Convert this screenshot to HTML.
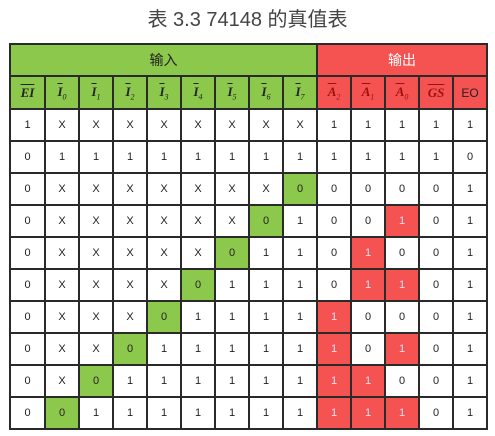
<!DOCTYPE html><html><head><style>
body{margin:0;background:#fff;width:495px;height:436px;overflow:hidden;font-family:"Liberation Sans","Noto Sans CJK SC",sans-serif}
.t{position:absolute;top:3px;left:0;width:495px;text-align:center;font-size:20px;color:#444;}
table{position:absolute;left:9px;top:43px;border-collapse:collapse;table-layout:fixed;width:479px}
td{border:2px solid #2a2a2a;height:30px;text-align:center;font-size:11px;color:#222;padding:0;box-sizing:border-box}
tr.h1 td{height:32px;font-size:14px}
tr.h2 td{height:33px;font-family:"Liberation Serif",serif;font-style:italic;font-weight:bold;font-size:13px}
tr.d td{height:32px}
.g{background:#8cc84b}.r{background:#f55252;color:#fde}
.o{text-decoration:overline}
sub{font-size:8px;font-weight:normal}
</style></head><body>
<div class="t">表 3.3 74148 的真值表</div>
<table>
<colgroup><col style="width:35px"><col span="13" style="width:34px"></colgroup>
<tr class="h1"><td colspan="9" class="g">输入</td><td colspan="5" class="r" style="color:#fff">输出</td></tr>
<tr class="h2"><td class="g"><span class="o">EI</span></td><td class="g"><span class="o">I</span><sub>0</sub></td><td class="g"><span class="o">I</span><sub>1</sub></td><td class="g"><span class="o">I</span><sub>2</sub></td><td class="g"><span class="o">I</span><sub>3</sub></td><td class="g"><span class="o">I</span><sub>4</sub></td><td class="g"><span class="o">I</span><sub>5</sub></td><td class="g"><span class="o">I</span><sub>6</sub></td><td class="g"><span class="o">I</span><sub>7</sub></td><td class="r" style="color:#a01010"><span class="o">A</span><sub>2</sub></td><td class="r" style="color:#a01010"><span class="o">A</span><sub>1</sub></td><td class="r" style="color:#a01010"><span class="o">A</span><sub>0</sub></td><td class="r" style="color:#a01010"><span class="o">GS</span></td><td class="r" style="font-family:'Liberation Sans',sans-serif;font-style:normal;font-weight:normal;font-size:12px;color:#222">EO</td></tr>
<tr class="d"><td>1</td><td>X</td><td>X</td><td>X</td><td>X</td><td>X</td><td>X</td><td>X</td><td>X</td><td>1</td><td>1</td><td>1</td><td>1</td><td>1</td></tr>
<tr class="d"><td>0</td><td>1</td><td>1</td><td>1</td><td>1</td><td>1</td><td>1</td><td>1</td><td>1</td><td>1</td><td>1</td><td>1</td><td>1</td><td>0</td></tr>
<tr class="d"><td>0</td><td>X</td><td>X</td><td>X</td><td>X</td><td>X</td><td>X</td><td>X</td><td class="g">0</td><td>0</td><td>0</td><td>0</td><td>0</td><td>1</td></tr>
<tr class="d"><td>0</td><td>X</td><td>X</td><td>X</td><td>X</td><td>X</td><td>X</td><td class="g">0</td><td>1</td><td>0</td><td>0</td><td class="r">1</td><td>0</td><td>1</td></tr>
<tr class="d"><td>0</td><td>X</td><td>X</td><td>X</td><td>X</td><td>X</td><td class="g">0</td><td>1</td><td>1</td><td>0</td><td class="r">1</td><td>0</td><td>0</td><td>1</td></tr>
<tr class="d"><td>0</td><td>X</td><td>X</td><td>X</td><td>X</td><td class="g">0</td><td>1</td><td>1</td><td>1</td><td>0</td><td class="r">1</td><td class="r">1</td><td>0</td><td>1</td></tr>
<tr class="d"><td>0</td><td>X</td><td>X</td><td>X</td><td class="g">0</td><td>1</td><td>1</td><td>1</td><td>1</td><td class="r">1</td><td>0</td><td>0</td><td>0</td><td>1</td></tr>
<tr class="d"><td>0</td><td>X</td><td>X</td><td class="g">0</td><td>1</td><td>1</td><td>1</td><td>1</td><td>1</td><td class="r">1</td><td>0</td><td class="r">1</td><td>0</td><td>1</td></tr>
<tr class="d"><td>0</td><td>X</td><td class="g">0</td><td>1</td><td>1</td><td>1</td><td>1</td><td>1</td><td>1</td><td class="r">1</td><td class="r">1</td><td>0</td><td>0</td><td>1</td></tr>
<tr class="d"><td>0</td><td class="g">0</td><td>1</td><td>1</td><td>1</td><td>1</td><td>1</td><td>1</td><td>1</td><td class="r">1</td><td class="r">1</td><td class="r">1</td><td>0</td><td>1</td></tr>
</table>
</body></html>
